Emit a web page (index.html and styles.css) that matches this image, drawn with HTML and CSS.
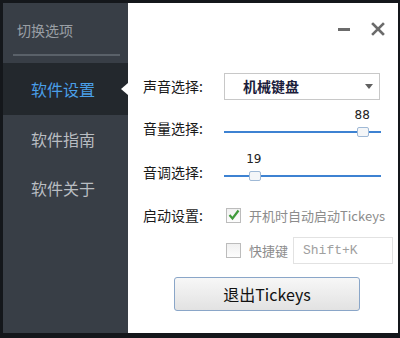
FILE: index.html
```html
<!DOCTYPE html>
<html lang="zh-CN">
<head>
    <meta charset="UTF-8">
    <title>Tickeys</title>
    <link rel="stylesheet" href="styles.css">
</head>
<body>

<div class="window">
    <!-- 左侧选项栏 -->
    <aside class="sidebar">
        <div class="side-title">切换选项</div>
        <div class="side-divider"></div>
        <ul class="side-nav">
            <li class="side-item active">软件设置</li>
            <li class="side-item">软件指南</li>
            <li class="side-item">软件关于</li>
        </ul>
    </aside>

    <!-- 设置面板 -->
    <main class="panel">
        <div class="titlebar">
            <span class="btn-min"></span>
            <svg class="btn-close" width="14" height="14" viewBox="0 0 14 14">
                <path d="M2 2 L12 12 M12 2 L2 12" stroke="#6b6b6b" stroke-width="2.6" stroke-linecap="square"/>
            </svg>
        </div>

        <div class="row row-select">
            <span class="label">声音选择:</span>
            <div class="select">
                <span class="select-text">机械键盘</span>
                <span class="select-arrow"></span>
            </div>
        </div>

        <div class="row">
            <span class="label">音量选择:</span>
            <div class="slider">
                <span class="slider-value" style="left: 88%;">88</span>
                <span class="slider-thumb" style="left: 88%;"></span>
            </div>
        </div>

        <div class="row">
            <span class="label">音调选择:</span>
            <div class="slider">
                <span class="slider-value" style="left: 19%;">19</span>
                <span class="slider-thumb" style="left: 19%;"></span>
            </div>
        </div>

        <div class="row row-check">
            <span class="label">启动设置:</span>
            <span class="checkbox checked">
                <svg width="12" height="12" viewBox="0 0 12 12">
                    <path d="M1.5 6 L4.5 9.5 L10.5 1.5" fill="none" stroke="#3f9a3a" stroke-width="2.2"/>
                </svg>
            </span>
            <span class="check-text">开机时自动启动Tickeys</span>
        </div>

        <div class="row row-hotkey">
            <span class="checkbox"></span>
            <span class="check-text">快捷键</span>
            <span class="hotkey-input">Shift+K</span>
        </div>

        <div class="actions">
            <button class="quit">退出Tickeys</button>
        </div>
    </main>
</div>

</body>
</html>
```

FILE: styles.css
```css
body {
    margin: 0;
    padding: 0;
    background: #14171b;
    font-family: "Noto Sans CJK SC", "Liberation Sans", sans-serif;
}
.window {
    display: flex;
    width: 395px;
    height: 330px;
    margin: 3px 0 0 3px;
}
.sidebar {
    width: 125px;
    background: #383e46;
    display: flex;
    flex-direction: column;
}
.side-title {
    color: #9a9fa5;
    font-size: 14px;
    padding: 17px 0 0 14px;
    height: 34px;
}
.side-divider {
    height: 2px;
    background: #5a6169;
    margin: 0 8px 0 10px;
}
.side-nav {
    list-style: none;
    margin: 7px 0 0 0;
    padding: 0;
}
.side-item {
    color: #b9bdc2;
    font-size: 16px;
    height: 49px;
    line-height: 49px;
    padding-left: 28px;
    position: relative;
}
.side-item.active {
    background: #23282d;
    color: #4a9fe8;
    height: 52px;
    line-height: 52px;
}
.side-item.active::after {
    content: "";
    position: absolute;
    right: 0;
    top: 20px;
    border-style: solid;
    border-width: 6px 7px 6px 0;
    border-color: transparent #ffffff transparent transparent;
}
.panel {
    flex: 1;
    background: #ffffff;
    padding: 0 0 0 15px;
    display: flex;
    flex-direction: column;
}
.titlebar {
    height: 69px;
    display: flex;
    justify-content: flex-end;
    align-items: flex-start;
    gap: 21px;
    padding: 19px 13px 0 0;
    box-sizing: border-box;
}
.btn-min {
    width: 12px;
    height: 3px;
    background: #6b6b6b;
    margin-top: 6px;
}
.row {
    display: flex;
    align-items: center;
    height: 44px;
    font-size: 14px;
    color: #1a1a1a;
}
.row-select {
    height: 28px;
    margin-bottom: 6px;
}
.label {
    width: 81px;
    flex-shrink: 0;
}
.select {
    width: 156px;
    height: 27px;
    border: 1px solid #c8c8c8;
    box-sizing: border-box;
    display: flex;
    align-items: center;
    justify-content: space-between;
    padding: 0 6px 0 18px;
}
.select-text {
    color: #1c1d3c;
    font-weight: bold;
    font-size: 14px;
}
.select-arrow {
    border-style: solid;
    border-width: 5px 4px 0 4px;
    border-color: #606060 transparent transparent transparent;
}
.slider {
    position: relative;
    width: 157px;
    height: 2px;
    background: #3d82d2;
    margin-top: 8px;
}
.slider-thumb {
    position: absolute;
    top: -4px;
    width: 10px;
    height: 8px;
    margin-left: -5px;
    background: #f4f6f8;
    border: 1px solid #9fb9d6;
    border-radius: 2px;
}
.slider-value {
    position: absolute;
    top: -23px;
    transform: translateX(-50%);
    font-family: "DejaVu Sans", sans-serif;
    font-size: 12px;
    color: #222;
}
.row-check {
    height: 42px;
}
.checkbox {
    width: 13px;
    height: 13px;
    border: 1px solid #bcbcbc;
    background: linear-gradient(#f0f0f0, #fdfdfd);
    display: flex;
    align-items: center;
    justify-content: center;
    margin: 0 8px 0 2px;
}
.check-text {
    color: #8c8c8c;
    font-size: 13px;
}
.row-hotkey {
    height: 29px;
    padding-left: 81px;
}
.hotkey-input {
    margin-left: 5px;
    width: 100px;
    height: 27px;
    box-sizing: border-box;
    border: 1px solid #e2e2e2;
    font-family: "Liberation Mono", monospace;
    font-size: 13px;
    color: #a0a0a0;
    line-height: 25px;
    padding-left: 9px;
}
.actions {
    padding: 12px 0 0 31px;
}
.quit {
    width: 186px;
    height: 34px;
    font-family: "Noto Sans CJK SC", "Liberation Sans", sans-serif;
    font-size: 16px;
    color: #111;
    background: linear-gradient(#f7f7f7, #e2e2e2);
    border: 1px solid #8aa6c8;
    border-radius: 3px;
    cursor: pointer;
}
```
